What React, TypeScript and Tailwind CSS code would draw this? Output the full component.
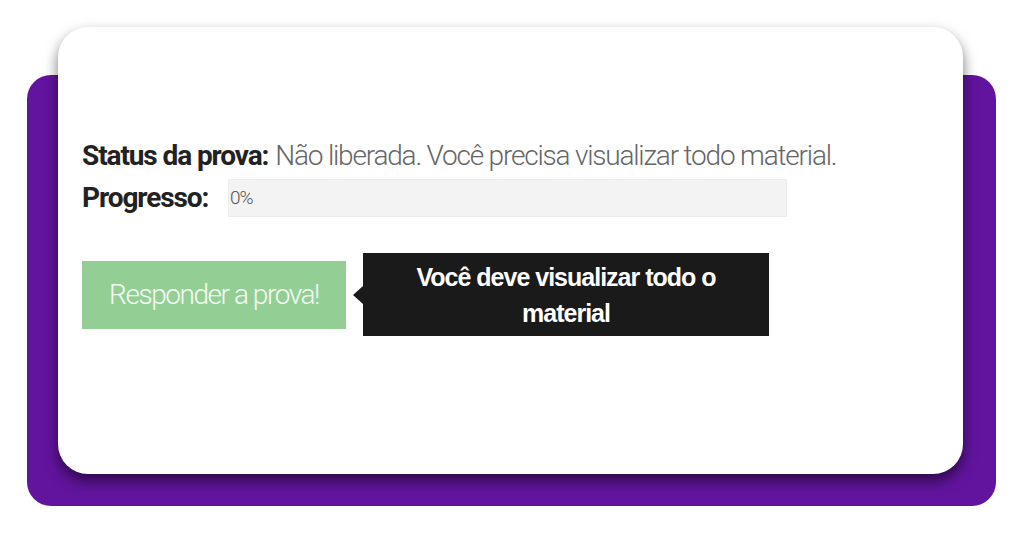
import React from "react";

export default function App() {
  return (
    <div className="w-[1024px] h-[536px] bg-white overflow-hidden grid">
      <div className="[grid-area:1/1] ml-[27px] mt-[75px] w-[969px] h-[431px] rounded-[24px] bg-[#62149e]" />
      <div className="[grid-area:1/1] ml-[58px] mt-[27px] w-[905px] h-[447px] rounded-[30px] bg-white shadow-[0_7px_14px_rgba(0,0,0,0.55)] pl-[24px] pt-[113px] font-['Roboto',sans-serif]">
        <div className="text-[28px] leading-[32px] whitespace-nowrap">
          <span className="font-bold text-[#222] tracking-[-1.1px]">Status da prova:</span>{" "}
          <span className="font-light text-[#666] tracking-[-1.2px]">Não liberada. Você precisa visualizar todo material.</span>
        </div>
        <div className="flex items-center mt-[7px]">
          <span className="w-[146px] text-[28px] leading-[32px] font-bold text-[#222] tracking-[-1.1px]">Progresso:</span>
          <div className="w-[559px] h-[38px] bg-[#f3f3f3] border border-[#ececec] flex items-center pl-[1px] text-[19px] font-light text-[#555] tracking-[-1px]">
            0%
          </div>
        </div>
        <div className="flex items-center mt-[36px]">
          <div className="w-[264px] h-[68px] bg-[#93cf95] flex items-center justify-center text-[28px] font-light text-[#f4fbf4] tracking-[-1.45px]">
            Responder a prova!
          </div>
          <div className="ml-[7px] flex items-center">
            <div className="w-0 h-0 border-y-[9px] border-y-transparent border-r-[10px] border-r-[#1a1a1a]" />
            <div className="w-[406px] h-[83px] bg-[#1a1a1a] flex flex-col items-center justify-center text-center text-white font-bold text-[25px] leading-[36px] tracking-[-1px] font-['Liberation_Sans',Arial,sans-serif]">
              <span>Você deve visualizar todo o</span>
              <span>material</span>
            </div>
          </div>
        </div>
      </div>
    </div>
  );
}
